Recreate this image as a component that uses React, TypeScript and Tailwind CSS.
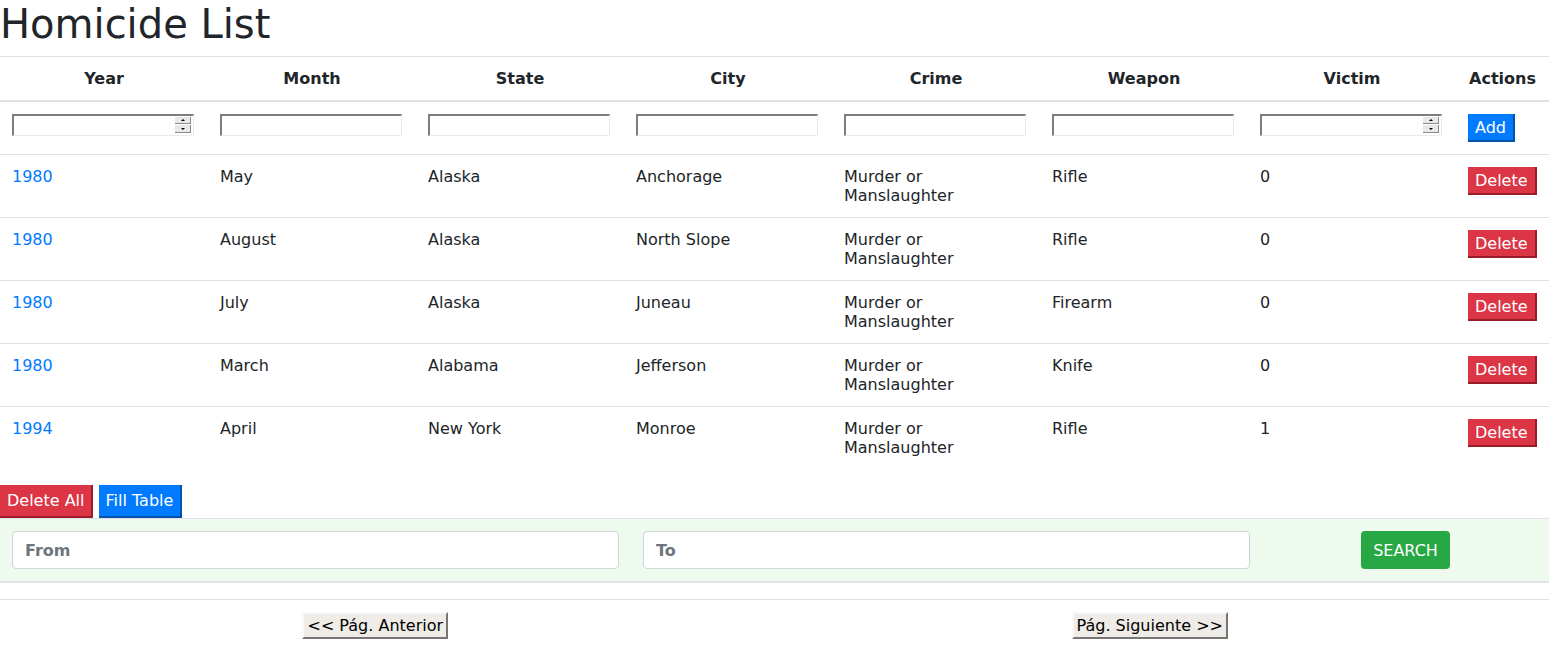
import React from 'react'

type Row = {
  year: string
  month: string
  state: string
  city: string
  crime: string
  weapon: string
  victim: string
}

const rows: Row[] = [
  { year: '1980', month: 'May', state: 'Alaska', city: 'Anchorage', crime: 'Murder or Manslaughter', weapon: 'Rifle', victim: '0' },
  { year: '1980', month: 'August', state: 'Alaska', city: 'North Slope', crime: 'Murder or Manslaughter', weapon: 'Rifle', victim: '0' },
  { year: '1980', month: 'July', state: 'Alaska', city: 'Juneau', crime: 'Murder or Manslaughter', weapon: 'Firearm', victim: '0' },
  { year: '1980', month: 'March', state: 'Alabama', city: 'Jefferson', crime: 'Murder or Manslaughter', weapon: 'Knife', victim: '0' },
  { year: '1994', month: 'April', state: 'New York', city: 'Monroe', crime: 'Murder or Manslaughter', weapon: 'Rifle', victim: '1' },
]

const headers = ['Year', 'Month', 'State', 'City', 'Crime', 'Weapon', 'Victim']

function FilterInput({ spinner }: { spinner?: boolean }) {
  return (
    <div className="relative w-[182px] h-[22px]">
      <input
        type="text"
        className="w-full h-full bg-white border-t-2 border-l-2 border-b border-r border-t-[#7d7d7d] border-l-[#7d7d7d] border-b-[#ebebeb] border-r-[#ebebeb] outline-none px-1"
      />
      {spinner && (
        <div className="absolute right-[3px] top-[3px] w-[16px] flex flex-col gap-[1px]">
          <div className="h-[7px] bg-[#e8e8e8] border-r border-b border-[#8a8a8a] flex items-center justify-center">
            <span className="block w-0 h-0 border-l-[2px] border-r-[2px] border-b-[2px] border-l-transparent border-r-transparent border-b-black" />
          </div>
          <div className="h-[8px] bg-[#e8e8e8] border-r border-b border-[#8a8a8a] flex items-center justify-center">
            <span className="block w-0 h-0 border-l-[2px] border-r-[2px] border-t-[2px] border-l-transparent border-r-transparent border-t-black" />
          </div>
        </div>
      )}
    </div>
  )
}

export default function App() {
  return (
    <div className="w-[1549px] min-h-[667px] bg-white text-[#212529] text-[16px] leading-[19px] font-['DejaVu_Sans',sans-serif]">
      <h1 className="text-[40px] leading-[48px] mb-2">Homicide List</h1>

      <table className="w-full table-fixed border-collapse mb-4">
        <thead>
          <tr className="border-t border-[#dee2e6] border-b-2">
            {headers.map(h => (
              <th key={h} className="w-[208px] p-3 font-bold text-center">{h}</th>
            ))}
            <th className="p-3 font-bold text-center">Actions</th>
          </tr>
        </thead>
        <tbody>
          <tr className="border-t border-[#dee2e6]">
            {headers.map((h, i) => (
              <td key={h} className="p-3 align-top">
                <FilterInput spinner={i === 0 || i === 6} />
              </td>
            ))}
            <td className="p-3 align-top">
              <button className="h-[28px] pl-[7px] pr-[7px] bg-[#007bff] text-white border-r-2 border-b-2 border-[#0052aa]">Add</button>
            </td>
          </tr>
          {rows.map((r, idx) => (
            <tr key={idx} className="border-t border-[#dee2e6]">
              <td className="p-3 align-top text-[#007bff]">{r.year}</td>
              <td className="p-3 align-top">{r.month}</td>
              <td className="p-3 align-top">{r.state}</td>
              <td className="p-3 align-top">{r.city}</td>
              <td className="p-3 align-top">{r.crime}</td>
              <td className="p-3 align-top">{r.weapon}</td>
              <td className="p-3 align-top">{r.victim}</td>
              <td className="p-3 align-top">
                <button className="h-[28px] pl-[7px] pr-[7px] bg-[#dc3545] text-white border-r-2 border-b-2 border-[#9b1c29] whitespace-nowrap">Delete</button>
              </td>
            </tr>
          ))}
        </tbody>
      </table>

      <div className="flex gap-[6px]">
        <button className="h-[33px] pl-[7px] pr-[6px] bg-[#dc3545] text-white border-r-2 border-b-2 border-[#9b1c29]">Delete All</button>
        <button className="h-[33px] pl-[7px] pr-[7px] bg-[#007bff] text-white border-r-2 border-b-2 border-[#0052aa]">Fill Table</button>
      </div>

      <div className="grid grid-cols-[631px_631px_1fr] bg-[#edfaed] border-t border-b-2 border-[#dee2e6]">
        <div className="p-3">
          <input placeholder="From" className="w-full h-[38px] px-3 bg-white border border-[#ced4da] rounded-[4px] outline-none placeholder:text-[#6c757d] placeholder:font-bold" />
        </div>
        <div className="p-3">
          <input placeholder="To" className="w-full h-[38px] px-3 bg-white border border-[#ced4da] rounded-[4px] outline-none placeholder:text-[#6c757d] placeholder:font-bold" />
        </div>
        <div className="p-3 flex justify-center">
          <button className="h-[38px] px-3 bg-[#28a745] text-white rounded-[4px] text-[16px]">SEARCH</button>
        </div>
      </div>

      <div className="mt-4 border-t border-[#dee2e6] pt-3">
        <div className="-ml-[12px] w-[1549px] grid grid-cols-2">
          <div className="flex justify-center">
            <button className="h-[27px] px-[3px] bg-[#efebe7] text-black border-2 border-t-[#f8f8f8] border-l-[#f8f8f8] border-r-[#767676] border-b-[#767676]">&lt;&lt; Pág. Anterior</button>
          </div>
          <div className="flex justify-center">
            <button className="h-[27px] px-[3px] bg-[#efebe7] text-black border-2 border-t-[#f8f8f8] border-l-[#f8f8f8] border-r-[#767676] border-b-[#767676]">Pág. Siguiente &gt;&gt;</button>
          </div>
        </div>
      </div>
    </div>
  )
}
